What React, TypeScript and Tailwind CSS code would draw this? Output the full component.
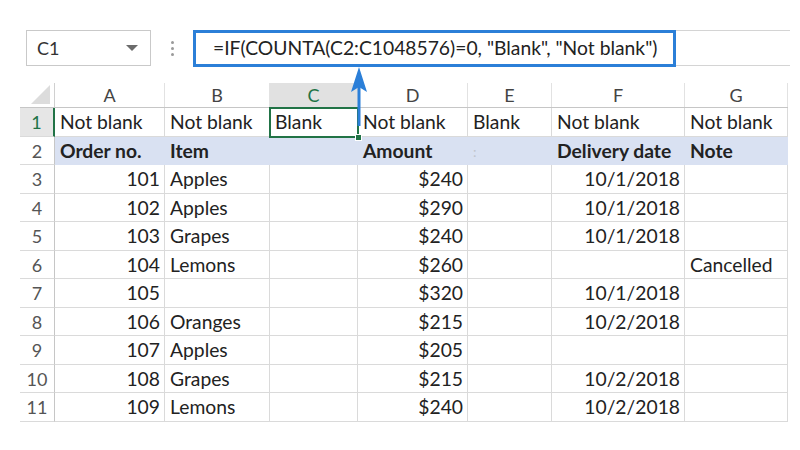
import React from 'react';

const cols = ['A', 'B', 'C', 'D', 'E', 'F', 'G'];
const widths = ['w-[110px]', 'w-[105px]', 'w-[88px]', 'w-[110px]', 'w-[84px]', 'w-[133px]', 'w-[103px]'];

type Cell = { text?: string; right?: boolean };

const rows: Cell[][] = [
  [{ text: 'Not blank' }, { text: 'Not blank' }, { text: 'Blank' }, { text: 'Not blank' }, { text: 'Blank' }, { text: 'Not blank' }, { text: 'Not blank' }],
  [{ text: 'Order no.' }, { text: 'Item' }, {}, { text: 'Amount' }, { text: ':' }, { text: 'Delivery date' }, { text: 'Note' }],
  [{ text: '101', right: true }, { text: 'Apples' }, {}, { text: '$240', right: true }, {}, { text: '10/1/2018', right: true }, {}],
  [{ text: '102', right: true }, { text: 'Apples' }, {}, { text: '$290', right: true }, {}, { text: '10/1/2018', right: true }, {}],
  [{ text: '103', right: true }, { text: 'Grapes' }, {}, { text: '$240', right: true }, {}, { text: '10/1/2018', right: true }, {}],
  [{ text: '104', right: true }, { text: 'Lemons' }, {}, { text: '$260', right: true }, {}, {}, { text: 'Cancelled' }],
  [{ text: '105', right: true }, {}, {}, { text: '$320', right: true }, {}, { text: '10/1/2018', right: true }, {}],
  [{ text: '106', right: true }, { text: 'Oranges' }, {}, { text: '$215', right: true }, {}, { text: '10/2/2018', right: true }, {}],
  [{ text: '107', right: true }, { text: 'Apples' }, {}, { text: '$205', right: true }, {}, {}, {}],
  [{ text: '108', right: true }, { text: 'Grapes' }, {}, { text: '$215', right: true }, {}, { text: '10/2/2018', right: true }, {}],
  [{ text: '109', right: true }, { text: 'Lemons' }, {}, { text: '$240', right: true }, {}, { text: '10/2/2018', right: true }, {}],
];

const App: React.FC = () => {
  return (
    <div className="relative w-[800px] h-[450px] bg-white overflow-hidden text-[#222]" style={{ fontFamily: 'Lato, "Liberation Sans", sans-serif' }}>
      {/* formula bar */}
      <div className="flex items-center pt-[30px] h-[66px]">
        <div className="ml-[26px] w-[125px] h-[36px] border border-[#c9c9c9] flex items-center justify-between pl-[10px] pr-[12px]">
          <span className="text-[18px] text-[#333]">C1</span>
          <span className="w-0 h-0 border-l-[6px] border-r-[6px] border-t-[6px] border-l-transparent border-r-transparent border-t-[#6b6b6b]" />
        </div>
        <div className="w-[42px] flex flex-col items-center gap-[3px]">
          <span className="w-[3px] h-[3px] rounded-full bg-[#9a9a9a]" />
          <span className="w-[3px] h-[3px] rounded-full bg-[#9a9a9a]" />
          <span className="w-[3px] h-[3px] rounded-full bg-[#9a9a9a]" />
        </div>
        <div className="w-[597px] h-[36px] border-y border-[#d4d4d4] flex">
          <div className="w-[483px] h-[37px] -mt-[1px] border-[3px] border-[#2b7fd8] flex items-center pl-[17px] text-[19.3px] text-[#222] whitespace-nowrap">
            =IF(COUNTA(C2:C1048576)=0, "Blank", "Not blank")
          </div>
        </div>
      </div>

      {/* sheet */}
      <div className="ml-[20px] mt-[17px] w-[768px]">
        <div className="flex h-[25px] border-b border-[#c6c6c6]">
          <div className="w-[35px] border-r border-[#d0d0d0] flex items-end justify-end pr-[4px] pb-[3px]">
            <svg width="19" height="19" viewBox="0 0 19 19">
              <path d="M19 0 L19 19 L0 19 Z" fill="#dcdcdc" />
            </svg>
          </div>
          {cols.map((c, i) => (
            <div
              key={c}
              className={`${widths[i]} border-r border-[#e2e2e2] flex items-center justify-center pt-[1px] text-[18px] ${c === 'C' ? 'bg-[#e1e1e1] text-[#217346]' : 'text-[#444]'}`}
            >
              {c}
            </div>
          ))}
        </div>
        {rows.map((r, ri) => {
          const band = ri === 1;
          return (
            <div key={ri} className="flex h-[28.5px]">
              <div
                className={`w-[35px] flex items-center justify-center pt-[2px] text-[18px] border-b border-[#dadada] ${ri === 0 ? 'bg-[#e6e6e6] text-[#217346] border-r-2 border-r-[#217346]' : 'text-[#555] border-r border-r-[#c6c6c6]'}`}
              >
                {ri + 1}
              </div>
              {r.map((cell, ci) => (
                <div
                  key={ci}
                  className={`${widths[ci]} flex items-center pt-[2px] text-[19.3px] whitespace-nowrap overflow-hidden ${cell.right ? 'justify-end pr-[4px]' : 'pl-[5px]'} ${band ? 'bg-[#d9e1f2] font-bold' : 'border-r border-b border-[#dadada]'}`}
                >
                  {cell.text === ':' ? <span className="text-[#c0c4cc] font-normal text-[14px]">:</span> : cell.text}
                </div>
              ))}
            </div>
          );
        })}
      </div>

      {/* selected cell C1 */}
      <div className="absolute left-[269px] top-[107px] w-[90px] h-[31px] border-2 border-[#217346]" />
      <div className="absolute left-[355px] top-[134px] w-[7px] h-[7px] bg-[#217346] border border-white" />

      {/* blue arrow */}
      <svg className="absolute left-[348px] top-[64px]" width="22" height="66" viewBox="0 0 22 66">
        <rect x="9.5" y="16" width="3" height="46" fill="#2b7fd8" />
        <path d="M11 3 L19 28 L11 23 L3 28 Z" fill="#2b7fd8" />
      </svg>
    </div>
  );
};

export default App;
